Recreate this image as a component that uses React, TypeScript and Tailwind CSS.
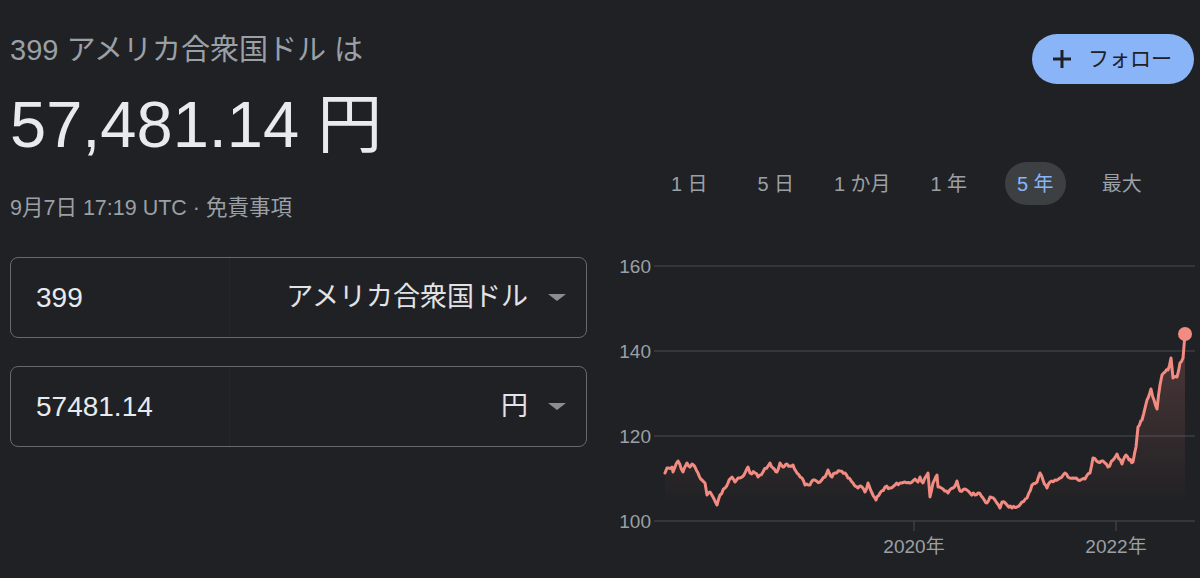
const FONT = "font-['Liberation_Sans','Noto_Sans_CJK_JP',sans-serif]";

// rough weekly path of the 5y chart, in page pixels
const points: [number, number][] = [
  [665, 473], [667, 468], [672, 467], [673, 472], [678, 461], [683, 472], [687, 463],
  [690, 467], [692, 464], [695, 467], [698, 473], [702, 480], [705, 483], [707, 495],
  [710, 492], [713, 497], [717, 505], [720, 495], [725, 488], [728, 483], [732, 477],
  [735, 482], [738, 478], [742, 477], [745, 473], [748, 467], [750, 473], [755, 473],
  [758, 477], [763, 472], [770, 463], [773, 468], [777, 472], [780, 463], [783, 467],
  [787, 464], [790, 466], [793, 465], [797, 473], [802, 478], [805, 485], [810, 485],
  [813, 480], [820, 482], [825, 477], [828, 470], [832, 477], [835, 473], [840, 471],
  [845, 473], [848, 478], [853, 483], [858, 488], [862, 487], [865, 492], [868, 483],
  [872, 493], [876, 500], [880, 493], [885, 487], [890, 488], [895, 485], [900, 483],
  [905, 482], [910, 483], [915, 479], [918, 482], [920, 477], [923, 483], [928, 473],
  [930, 497], [933, 483], [937, 475], [938, 487], [943, 489], [948, 493], [953, 488],
  [957, 481], [960, 491], [965, 489], [970, 493], [975, 495], [978, 493], [983, 498],
  [987, 503], [990, 497], [995, 500], [1000, 508], [1002, 502], [1007, 505], [1012, 508],
  [1017, 507], [1022, 502], [1027, 498], [1032, 485], [1037, 482], [1040, 473], [1043, 480],
  [1047, 488], [1050, 482], [1055, 480], [1060, 478], [1065, 473], [1068, 477], [1073, 478],
  [1078, 480], [1085, 479], [1090, 473], [1093, 458], [1098, 462], [1103, 461], [1105, 463],
  [1108, 467], [1113, 460], [1117, 454], [1122, 464], [1126, 455], [1129, 460], [1133, 462],
  [1136, 447], [1138, 427], [1142, 420], [1147, 400], [1151, 389], [1154, 400], [1157, 409],
  [1160, 385], [1162, 375], [1165, 372], [1168, 370], [1171, 358], [1173, 378], [1177, 377],
  [1180, 363], [1183, 358], [1185, 334],
];

function jagged() {
  let seed = 11;
  const rnd = () => {
    seed = (seed * 9301 + 49297) % 233280;
    return seed / 233280;
  };
  const out: [number, number][] = [];
  for (let i = 0; i < points.length - 1; i++) {
    const [x0, y0] = points[i];
    const [x1, y1] = points[i + 1];
    const steps = Math.max(1, Math.round((x1 - x0) / 1.6));
    for (let s = 0; s < steps; s++) {
      const t = s / steps;
      const j = s === 0 ? 0 : (rnd() - 0.5) * 3;
      out.push([x0 + (x1 - x0) * t, y0 + (y1 - y0) * t + j]);
    }
  }
  out.push(points[points.length - 1]);
  return out;
}

const line = jagged();
const linePath = line.map(([x, y], i) => `${i ? "L" : "M"}${x.toFixed(1)},${y.toFixed(1)}`).join(" ");
const areaPath = `${linePath} L1185,521 L665,521 Z`;

const tabs = ["1 日", "5 日", "1 か月", "1 年", "5 年", "最大"];

function Caret() {
  return (
    <svg width="18" height="7" viewBox="0 0 18 7" className="ml-[20px] shrink-0">
      <polygon points="0,0 18,0 9,7" fill="#8a8e93" />
    </svg>
  );
}

function CurrencyBox({ value, unit }: { value: string; unit: string }) {
  return (
    <div className="flex h-[81px] w-[577px] items-center rounded-[8px] border border-[#66696d]">
      <div className="flex h-full w-[219px] items-center border-r border-[#25272b] pl-[25px] text-[28px] text-[#e8eaed]">
        {value}
      </div>
      <div className="flex flex-1 items-center justify-end pr-[20px]">
        <span className="text-[27px] leading-none text-[#e1e3e6]">{unit}</span>
        <Caret />
      </div>
    </div>
  );
}

function Chart() {
  const grid = [
    { y: 266, label: "160" },
    { y: 351, label: "140" },
    { y: 436, label: "120" },
    { y: 521, label: "100" },
  ];
  return (
    <svg width="600" height="328" viewBox="600 250 600 328" className="block">
      <defs>
        <linearGradient id="fade" x1="0" y1="334" x2="0" y2="505" gradientUnits="userSpaceOnUse">
          <stop offset="0" stopColor="#f28b82" stopOpacity="0.22" />
          <stop offset="1" stopColor="#f28b82" stopOpacity="0" />
        </linearGradient>
      </defs>
      {grid.map((g) => (
        <g key={g.label}>
          <line x1="654" x2="1195" y1={g.y} y2={g.y} stroke="#494c50" strokeWidth="1" />
          <text
            x="651"
            y={g.y + 7}
            textAnchor="end"
            fontSize="19"
            fill="#9aa0a6"
            fontFamily="'Liberation Sans', sans-serif"
          >
            {g.label}
          </text>
        </g>
      ))}
      {[
        { x: 914, label: "2020年" },
        { x: 1116, label: "2022年" },
      ].map((t) => (
        <g key={t.label}>
          <line x1={t.x} x2={t.x} y1="521" y2="531" stroke="#494c50" strokeWidth="1" />
          <text
            x={t.x}
            y="553"
            textAnchor="middle"
            fontSize="19"
            fill="#9aa0a6"
            fontFamily="'Liberation Sans', 'Noto Sans CJK JP', sans-serif"
          >
            {t.label}
          </text>
        </g>
      ))}
      <path d={areaPath} fill="url(#fade)" />
      <path d={linePath} fill="none" stroke="#f28b82" strokeWidth="3" strokeLinejoin="round" strokeLinecap="round" />
      <circle cx="1185" cy="334" r="7" fill="#f28b82" />
    </svg>
  );
}

export default function App() {
  return (
    <div className={`flex h-[578px] w-[1200px] overflow-hidden bg-[#202124] ${FONT}`}>
      <div className="flex w-[600px] flex-col pl-[10px] pt-[32px]">
        <div className="text-[29px] leading-[36px] text-[#9aa0a6]">399 アメリカ合衆国ドル は</div>
        <div className="mt-[21px] text-[65px] leading-[72px] text-[#e8eaed]">57,481.14 円</div>
        <div className="mt-[35px] text-[21.5px] leading-[24px] text-[#9aa0a6]">9月7日 17:19 UTC · 免責事項</div>
        <div className="mt-[37px]">
          <CurrencyBox value="399" unit="アメリカ合衆国ドル" />
        </div>
        <div className="mt-[28px]">
          <CurrencyBox value="57481.14" unit="円" />
        </div>
      </div>

      <div className="flex w-[600px] flex-col">
        <button className="mr-[6px] mt-[34px] flex h-[50px] w-[162px] items-center self-end rounded-full bg-[#8ab4f8] pl-[20px]">
          <svg width="20" height="20" viewBox="0 0 20 20">
            <path d="M10 1v18M1 10h18" stroke="#202124" strokeWidth="3" />
          </svg>
          <span className="ml-[16px] text-[21px] text-[#202124]">フォロー</span>
        </button>

        <div className="ml-[46px] mt-[78px] grid h-[43px] w-[519px] grid-cols-6">
          {tabs.map((t) => (
            <div key={t} className="flex items-center justify-center">
              {t === "5 年" ? (
                <span className="flex h-[43px] w-[61px] items-center justify-center rounded-full bg-[#3c4043] text-[20px] text-[#8ab4f8]">
                  {t}
                </span>
              ) : (
                <span className="text-[20px] text-[#9aa0a6]">{t}</span>
              )}
            </div>
          ))}
        </div>

        <div className="mt-[45px]">
          <Chart />
        </div>
      </div>
    </div>
  );
}
